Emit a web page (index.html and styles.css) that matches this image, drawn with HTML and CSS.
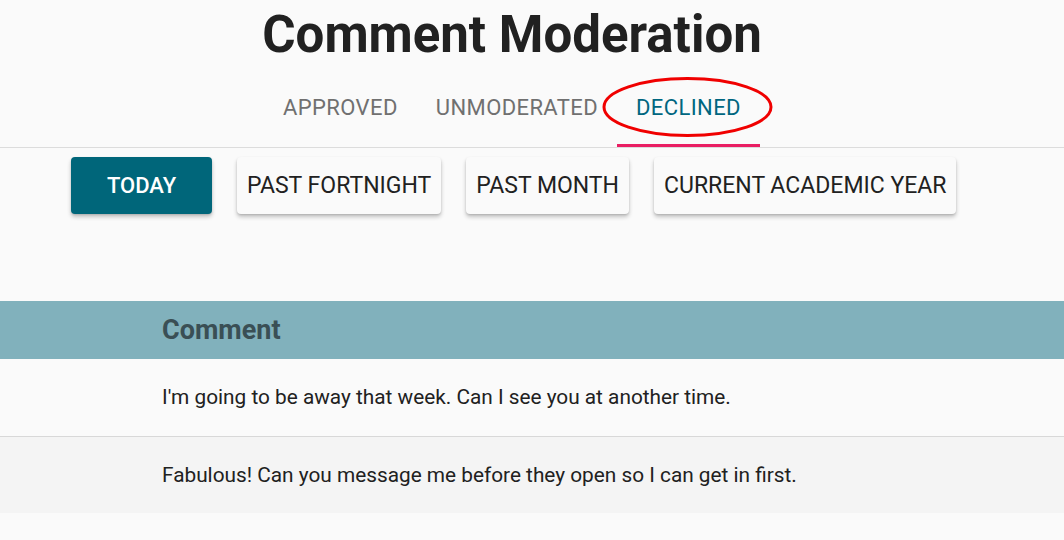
FILE: index.html
```html
<!DOCTYPE html>
<html>
<head>
<meta charset="utf-8">
<link rel="stylesheet" href="styles.css">
</head>
<body>
<div class="page">
  <header class="head">
    <h1 class="title">Comment Moderation</h1>
    <nav class="tabs">
      <div class="tab">APPROVED</div>
      <div class="tab">UNMODERATED</div>
      <div class="tab active">DECLINED
        <svg class="ring" width="172" height="62" viewBox="0 0 172 62"><ellipse cx="85.5" cy="30" rx="83.5" ry="28.5" fill="none" stroke="#f00000" stroke-width="3"/></svg>
      </div>
    </nav>
  </header>
  <div class="filters">
    <button class="btn primary">TODAY</button>
    <button class="btn">PAST FORTNIGHT</button>
    <button class="btn">PAST MONTH</button>
    <button class="btn">CURRENT ACADEMIC YEAR</button>
  </div>
  <div class="table">
    <div class="th">Comment</div>
    <div class="row">I'm going to be away that week. Can I see you at another time.</div>
    <div class="row alt">Fabulous! Can you message me before they open so I can get in first.</div>
  </div>
</div>
</body>
</html>
```

FILE: styles.css
```css
html, body {
  margin: 0;
  padding: 0;
  background: #fafafa;
  font-family: Roboto, "Noto Sans", sans-serif;
}
.page {
  width: 1064px;
  height: 540px;
  overflow: hidden;
}
.head {
  border-bottom: 1px solid #dcdcdc;
}
.title {
  width: 1024px;
  margin: 0;
  padding-top: 3px;
  text-align: center;
  font-size: 51px;
  font-weight: 700;
  line-height: 64px;
  color: #212121;
}
.tabs {
  width: 1024px;
  display: flex;
  justify-content: center;
  margin-top: 10px;
}
.tab {
  position: relative;
  padding: 0 19px;
  height: 70px;
  padding-top: 1px;
  line-height: 60px;
  font-size: 22px;
  font-weight: 400;
  letter-spacing: 0.4px;
  color: #707070;
  box-sizing: border-box;
}
.tab.active {
  color: #006680;
  border-bottom: 3px solid #e91e63;
}
.ring {
  position: absolute;
  left: -15px;
  top: 0;
}
.filters {
  display: flex;
  gap: 25px;
  padding: 9px 0 0 71px;
  height: 153px;
  box-sizing: border-box;
}
.btn {
  height: 57px;
  border: none;
  border-radius: 4px;
  background: #fafafa;
  font-family: Roboto, sans-serif;
  font-size: 23px;
  font-weight: 400;
  color: #212121;
  padding: 0 10px;
  box-shadow: 0 3px 4px rgba(0,0,0,0.22), 0 1px 2px rgba(0,0,0,0.12);
}
.btn.primary {
  background: #00667a;
  color: #fff;
  font-weight: 500;
  font-size: 22px;
  width: 141px;
}
.table {
  width: 1064px;
}
.th {
  background: #81b1bc;
  height: 58px;
  line-height: 58px;
  padding-left: 162px;
  font-size: 27px;
  font-weight: 700;
  color: #3a4f55;
}
.row {
  height: 77px;
  line-height: 77px;
  padding-left: 162px;
  font-size: 20.8px;
  color: #212121;
  background: #fafafa;
  border-bottom: 1px solid #d8d8d8;
}
.row.alt {
  background: #f4f4f4;
  border-bottom: none;
  height: 76px;
  line-height: 76px;
}
```
